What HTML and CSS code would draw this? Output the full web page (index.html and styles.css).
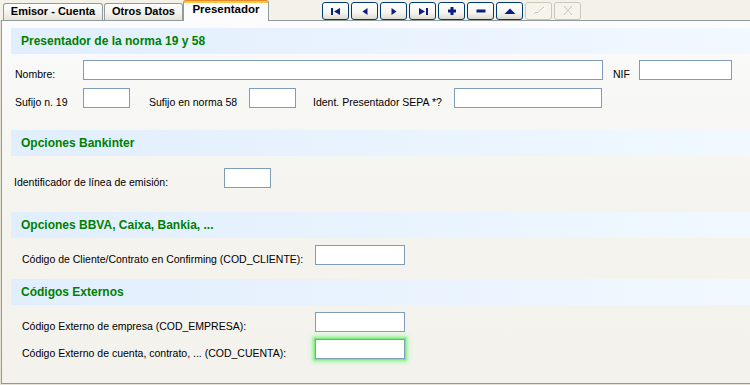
FILE: index.html
```html
<!DOCTYPE html>
<html lang="es">
<head>
<meta charset="utf-8">
<title>Presentador</title>
<link rel="stylesheet" href="styles.css">
</head>
<body>
<div class="top">
  <div class="tabs">
    <div class="tab t1">Emisor - Cuenta</div>
    <div class="tab t2">Otros Datos</div>
    <div class="tab t3 active">Presentador</div>
  </div>
  <div class="toolbar">
    <button class="btn"><svg width="12" height="9" viewBox="0 0 12 9"><rect x="1" y="1" width="2" height="7" fill="#0a1d84"/><polygon points="10,1 10,8 4,4.5" fill="#0a1d84"/></svg></button>
    <button class="btn"><svg width="12" height="9" viewBox="0 0 12 9"><polygon points="8.5,1 8.5,8 3.5,4.5" fill="#0a1d84"/></svg></button>
    <button class="btn"><svg width="12" height="9" viewBox="0 0 12 9"><polygon points="3.5,1 3.5,8 8.5,4.5" fill="#0a1d84"/></svg></button>
    <button class="btn"><svg width="12" height="9" viewBox="0 0 12 9"><polygon points="2,1 2,8 8,4.5" fill="#0a1d84"/><rect x="9" y="1" width="2" height="7" fill="#0a1d84"/></svg></button>
    <button class="btn"><svg width="12" height="10" viewBox="0 0 12 10"><rect x="2" y="3.5" width="8" height="3" fill="#0a1d84"/><rect x="4.5" y="1" width="3" height="8" fill="#0a1d84"/></svg></button>
    <button class="btn"><svg width="12" height="10" viewBox="0 0 12 10"><rect x="1.5" y="3.5" width="9" height="3" fill="#0a1d84"/></svg></button>
    <button class="btn"><svg width="14" height="9" viewBox="0 0 14 9"><polygon points="1.5,7 12.5,7 7,1.5" fill="#0a1d84"/></svg></button>
    <button class="btn off"><svg width="14" height="10" viewBox="0 0 14 10"><polyline points="2,8 4,6 5,7 12,1" fill="none" stroke="#ffffff" stroke-width="1" transform="translate(1,1)"/><polyline points="2,8 4,6 5,7 12,1" fill="none" stroke="#c6c3b0" stroke-width="1"/></svg></button>
    <button class="btn off"><svg width="14" height="12" viewBox="0 0 14 12"><path d="M3 1 L11 10 M11 1 L3 10" fill="none" stroke="#ffffff" stroke-width="1" transform="translate(1,1)"/><path d="M3 1 L11 10 M11 1 L3 10" fill="none" stroke="#c6c3b0" stroke-width="1"/></svg></button>
  </div>
</div>
<div class="panel">
  <div class="hdr h1">Presentador de la norma 19 y 58</div>
  <div class="row s1 r1">
    <label class="lbl l68">Nombre:</label><input class="fld w520" type="text">
    <label class="lbl lnif">NIF</label><input class="fld w93" type="text">
  </div>
  <div class="row s1 r2">
    <label class="lbl l68">Sufijo n. 19</label><input class="fld w47" type="text">
    <label class="lbl lsuf">Sufijo en norma 58</label><input class="fld w47" type="text">
    <label class="lbl lsepa">Ident. Presentador SEPA *?</label><input class="fld w148" type="text">
  </div>
  <div class="hdr h2">Opciones Bankinter</div>
  <div class="row s2 r3">
    <label class="lbl l210">Identificador de línea de emisión:</label><input class="fld w47" type="text">
  </div>
  <div class="hdr h3">Opciones BBVA, Caixa, Bankia, ...</div>
  <div class="row s3 r4">
    <label class="lbl l293">Código de Cliente/Contrato en Confirming (COD_CLIENTE):</label><input class="fld w90" type="text">
  </div>
  <div class="hdr h4">Códigos Externos</div>
  <div class="row s3 r5">
    <label class="lbl l293">Código Externo de empresa (COD_EMPRESA):</label><input class="fld w90" type="text">
  </div>
  <div class="row s3 r6">
    <label class="lbl l293">Código Externo de cuenta, contrato, ... (COD_CUENTA):</label><input class="fld w90 glow" type="text">
  </div>
</div>
</body>
</html>
```
FILE: styles.css
```css
html, body {
  margin: 0;
  padding: 0;
}
body {
  width: 750px;
  height: 385px;
  overflow: hidden;
  background: #e6e3d6;
  font-family: "Liberation Sans", Arial, sans-serif;
  color: #000;
}
.top {
  height: 20px;
  display: flex;
  background: #f4f1e8;
}
.tabs {
  display: flex;
  align-items: flex-end;
  padding-left: 3px;
  height: 20px;
}
.tab {
  box-sizing: border-box;
  height: 17px;
  border: 1px solid #919b9c;
  border-bottom: 0;
  border-radius: 3px 3px 0 0;
  background: linear-gradient(#fefefe, #f3f2ec 55%, #e6e4d8);
  font-size: 11px;
  font-weight: bold;
  line-height: 15px;
  text-align: center;
  white-space: nowrap;
}
.t1 { width: 100px; margin-right: 1px; }
.t2 { width: 79px; }
.t3 { width: 86px; }
.tab.active {
  position: relative;
  z-index: 1;
  align-self: flex-start;
  height: 21px;
  margin-bottom: -1px;
  border-top: 1px solid #e68b2c;
  border-radius: 3px 3px 0 0;
  background: linear-gradient(#ffc83c 0, #ffc83c 2px, #fcfcfe 2px);
  font-size: 11.5px;
  line-height: 14px;
  padding-top: 1px;
}
.toolbar {
  display: flex;
  margin-left: 53px;
  padding-top: 2px;
}
.btn {
  box-sizing: border-box;
  width: 27px;
  height: 18px;
  margin: 0 2px 0 0;
  padding: 0;
  border: 1px solid #003c74;
  border-radius: 3px;
  background: linear-gradient(#ffffff, #f5f4ef 60%, #dedad0);
  display: flex;
  align-items: center;
  justify-content: center;
}
.btn.off {
  border-color: #c9c7ba;
  background: #f5f4ea;
}
.btn svg { display: block; }
.panel {
  box-sizing: border-box;
  margin-left: 1px;
  height: 364px;
  border-top: 1px solid #919b9c;
  border-left: 1px solid #919b9c;
  border-bottom: 1px solid #919b9c;
  background: linear-gradient(#fcfcfe 0, #f8f8f6 60px, #f4f3ee 200px, #f3f2ed 100%);
  overflow: hidden;
}
.hdr {
  margin-left: 9px;
  height: 26px;
  padding-left: 10px;
  background: linear-gradient(to right, #e1eefd, #f1f8ff);
  color: #008000;
  font-size: 12px;
  font-weight: bold;
  line-height: 26px;
  white-space: nowrap;
}
.h1 { margin-top: 7px; }
.h2 { margin-top: 22px; }
.h3 { margin-top: 24px; }
.h4 { margin-top: 14px; }
.row {
  display: flex;
  align-items: flex-start;
  height: 20px;
}
.r1 { margin-top: 6px; }
.r2 { margin-top: 8px; }
.r3 { margin-top: 12px; }
.r4 { margin-top: 7px; }
.r5 { margin-top: 7px; }
.r6 { margin-top: 7px; }
.s1 { padding-left: 13px; }
.s2 { padding-left: 12px; }
.s3 { padding-left: 20px; }
.lbl {
  box-sizing: border-box;
  flex: none;
  font-size: 10.5px;
  line-height: 16px;
  padding-top: 6px;
  white-space: nowrap;
}
.l68 { width: 68px; }
.lnif { width: 26px; margin-left: 10px; }
.lsuf { width: 100px; margin-left: 19px; }
.lsepa { width: 141px; margin-left: 17px; }
.l210 { width: 210px; }
.l293 { width: 293px; }
.fld {
  box-sizing: border-box;
  flex: none;
  height: 20px;
  margin: 0;
  padding: 0;
  border: 1px solid #7f9db9;
  background: #fff;
  outline: none;
}
.w520 { width: 520px; }
.w93 { width: 93px; }
.w47 { width: 47px; }
.w148 { width: 148px; }
.w90 { width: 90px; }
.glow {
  box-shadow: 0 0 0 1px #7cec7c, 0 0 2px 2px #8ef28e, 0 0 5px 3px #b4f7b4;
}
```
